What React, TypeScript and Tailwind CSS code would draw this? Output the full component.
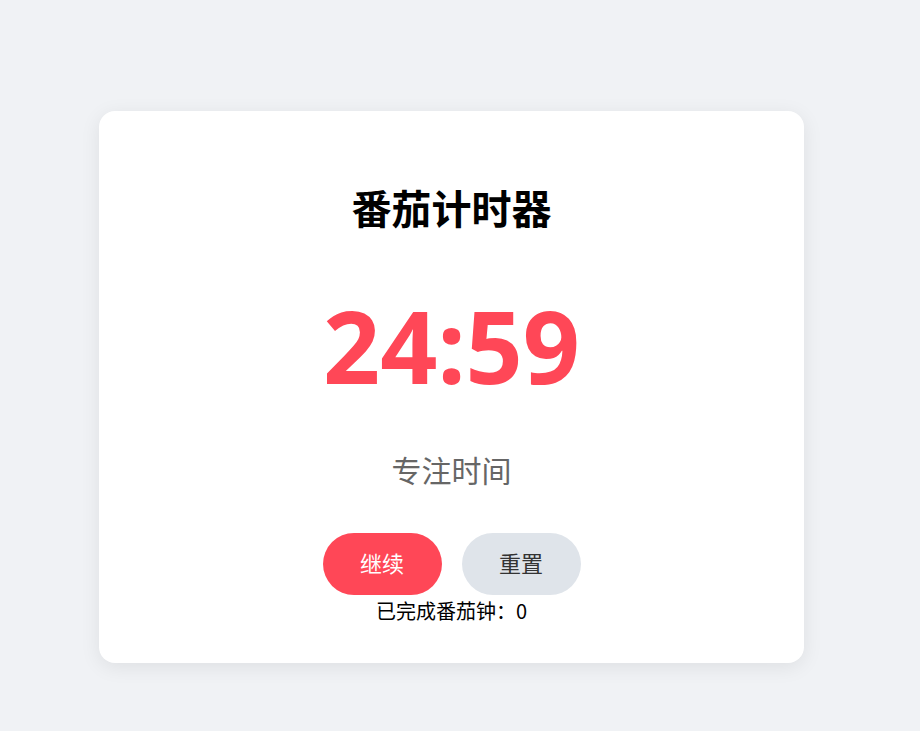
import { useState, useEffect } from 'react'

const FONT = '[font-family:"Liberation_Sans","Noto_Sans_CJK_SC",sans-serif]'

export default function App() {
    const [seconds, setSeconds] = useState(24 * 60 + 59)
    const [running, setRunning] = useState(false)
    const [completed, setCompleted] = useState(0)

    useEffect(() => {
        if (!running) return
        const id = setInterval(() => {
            setSeconds(s => {
                if (s <= 1) {
                    setCompleted(c => c + 1)
                    setRunning(false)
                    return 25 * 60
                }
                return s - 1
            })
        }, 1000)
        return () => clearInterval(id)
    }, [running])

    const mm = String(Math.floor(seconds / 60)).padStart(2, '0')
    const ss = String(seconds % 60).padStart(2, '0')

    return (
        <div className={`min-h-[731px] bg-[#f0f2f5] pl-[99px] pt-[111px] ${FONT}`}>
            <div className="w-[705px] rounded-2xl bg-white pt-[70px] pb-[39px] shadow-[0_4px_20px_rgba(0,0,0,0.08)] flex flex-col items-center">
                <h1 className="text-[40px] leading-[58px] font-bold text-black">番茄计时器</h1>

                {/* timer digits */}
                <div className='mt-[56px] text-[100px] leading-[100px] font-bold text-[#ff4757] [font-family:"Noto_Sans",sans-serif]'>
                    {mm}:{ss}
                </div>

                <div className="mt-[57px] text-[30px] leading-[40px] text-[#666666]">专注时间</div>

                <div className="mt-[41px] flex gap-5">
                    <button
                        className="w-[119px] h-[62px] rounded-full bg-[#ff4757] text-white text-[22px]"
                        onClick={() => setRunning(r => !r)}
                    >
                        {running ? '暂停' : '继续'}
                    </button>
                    <button
                        className="w-[119px] h-[62px] rounded-full bg-[#dfe4ea] text-[#333333] text-[22px]"
                        onClick={() => { setRunning(false); setSeconds(25 * 60) }}
                    >
                        重置
                    </button>
                </div>

                <div className="mt-[3px] text-[20px] leading-[26px] text-black [font-family:'Noto_Sans_CJK_SC',sans-serif]">已完成番茄钟：{completed}</div>
            </div>
        </div>
    )
}
